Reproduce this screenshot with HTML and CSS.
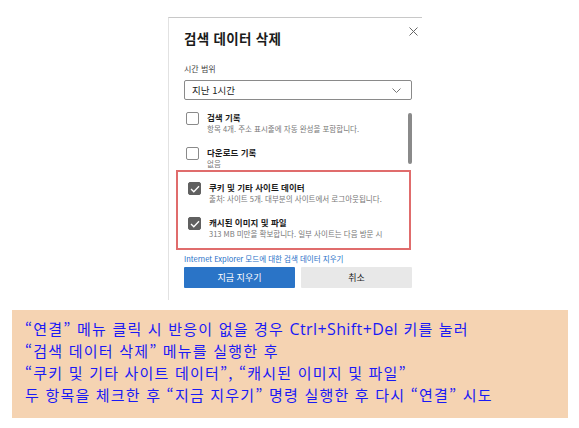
FILE: index.html
```html
<!DOCTYPE html>
<html lang="ko">
<head>
    <meta charset="UTF-8">
    <title>검색 데이터 삭제</title>
    <link rel="stylesheet" href="styles.css">
</head>
<body>

    <div class="dialog">
        <span class="close">
            <svg width="9" height="9" viewBox="0 0 9 9"><path d="M0.5 0.5 L8.5 8.5 M8.5 0.5 L0.5 8.5" stroke="#666" stroke-width="1" fill="none"/></svg>
        </span>
        <h1>검색 데이터 삭제</h1>
        <div class="label">시간 범위</div>
        <div class="select">
            <span>지난 1시간</span>
            <svg width="9" height="5" viewBox="0 0 9 5"><path d="M0.5 0.5 L4.5 4.5 L8.5 0.5" stroke="#777" stroke-width="1" fill="none"/></svg>
        </div>

        <div class="list">
            <div class="scrollbar"></div>
            <div class="item">
                <span class="box"></span>
                <div>
                    <div class="name">검색 기록</div>
                    <div class="desc">항목 4개. 주소 표시줄에 자동 완성을 포함합니다.</div>
                </div>
            </div>
            <div class="item">
                <span class="box"></span>
                <div>
                    <div class="name">다운로드 기록</div>
                    <div class="desc">없음</div>
                </div>
            </div>

            <!-- 체크한 항목 -->
            <div class="highlight">
                <div class="item">
                    <span class="box checked">
                        <svg width="10" height="8" viewBox="0 0 10 8"><path d="M1 4 L3.8 6.8 L9 1.2" stroke="#fff" stroke-width="1.3" fill="none"/></svg>
                    </span>
                    <div>
                        <div class="name">쿠키 및 기타 사이트 데이터</div>
                        <div class="desc">출처: 사이트 5개. 대부분의 사이트에서 로그아웃됩니다.</div>
                    </div>
                </div>
                <div class="item">
                    <span class="box checked">
                        <svg width="10" height="8" viewBox="0 0 10 8"><path d="M1 4 L3.8 6.8 L9 1.2" stroke="#fff" stroke-width="1.3" fill="none"/></svg>
                    </span>
                    <div>
                        <div class="name">캐시된 이미지 및 파일</div>
                        <div class="desc">313 MB 미만을 확보합니다. 일부 사이트는 다음 방문 시</div>
                    </div>
                </div>
            </div>
        </div>

        <a class="ie-link" href="#">Internet Explorer 모드에 대한 검색 데이터 지우기</a>
        <div class="buttons">
            <button class="btn primary">지금 지우기</button>
            <button class="btn">취소</button>
        </div>
    </div>

    <div class="notice">
        <p>“연결” 메뉴 클릭 시 반응이 없을 경우 <span class="latin">Ctrl+Shift+Del</span> 키를 눌러</p>
        <p>“검색 데이터 삭제” 메뉴를 실행한 후</p>
        <p>“쿠키 및 기타 사이트 데이터”, “캐시된 이미지 및 파일”</p>
        <p>두 항목을 체크한 후 “지금 지우기” 명령 실행한 후 다시 “연결” 시도</p>
    </div>

</body>
</html>
```

FILE: styles.css
```css
body {
    margin: 0;
    padding: 17px 0 0 0;
    background: #fff;
    font-family: "Noto Sans CJK KR", "Noto Sans", sans-serif;
}

/* 대화상자 */
.dialog {
    position: relative;
    margin-left: 168px;
    width: 254px;
    height: 283px;
    box-sizing: border-box;
    border-top: 1px solid #c8c8c8;
    border-left: 1px solid #e2e2e2;
    padding: 0 0 0 15px;
    color: #1b1b1b;
}

.close {
    position: absolute;
    top: 9px;
    right: 4px;
    line-height: 0;
}

.dialog h1 {
    margin: 0;
    padding-top: 11px;
    font-size: 13.5px;
    font-weight: 600;
    line-height: 18px;
    letter-spacing: 0.3px;
}

.label {
    margin-top: 17px;
    font-size: 8px;
    line-height: 10px;
    color: #444;
}

.select {
    margin-top: 6px;
    width: 228px;
    height: 20px;
    box-sizing: border-box;
    border: 1px solid #8a8a8a;
    border-radius: 2px;
    display: flex;
    align-items: center;
    justify-content: space-between;
    padding: 0 10px 0 7px;
    font-size: 9.5px;
}

/* 항목 목록 */
.list {
    position: relative;
    margin-top: 12px;
    width: 228px;
}

.scrollbar {
    position: absolute;
    top: 1px;
    right: 0;
    width: 4px;
    height: 51px;
    border-radius: 2px;
    background: #8a8a8a;
}

.item {
    display: flex;
    align-items: flex-start;
    gap: 8px;
    padding-left: 2px;
    height: 35px;
}

.box {
    width: 13px;
    height: 13px;
    flex: none;
    box-sizing: border-box;
    border: 1px solid #8a8a8a;
    border-radius: 2px;
    display: flex;
    align-items: center;
    justify-content: center;
}

.box.checked {
    background: #606060;
    border-color: #606060;
}

.name {
    font-size: 8.5px;
    font-weight: 700;
    line-height: 11px;
}

.desc {
    font-size: 7.5px;
    line-height: 11px;
    color: #777;
    white-space: nowrap;
}

.highlight {
    position: relative;
    margin-left: -8px;
    margin-top: -12px;
    width: 235px;
    height: 80px;
    box-sizing: border-box;
    border: 2px solid #e06c6c;
    background: #fff;
    padding: 10px 0 0 8px;
    overflow: hidden;
}

.ie-link {
    display: block;
    margin-top: 4px;
    font-size: 7.5px;
    line-height: 10px;
    color: #1f6fc7;
    text-decoration: none;
}

.buttons {
    margin-top: 3px;
    display: flex;
    gap: 6px;
    width: 228px;
}

.btn {
    flex: 1;
    height: 21px;
    border: none;
    border-radius: 1px;
    background: #e8e8e8;
    color: #1b1b1b;
    font-family: inherit;
    font-size: 9px;
    padding: 0;
}

.btn.primary {
    background: #2a74c7;
    color: #fff;
}

/* 안내 문구 */
.notice {
    margin: 10px 0 0 12px;
    width: 556px;
    height: 108px;
    box-sizing: border-box;
    background: #f5d3b2;
    padding: 8px 0 0 13px;
    color: #1a1af5;
    font-size: 15px;
    letter-spacing: 1.2px;
}

.notice p {
    margin: 0;
    line-height: 22px;
    white-space: nowrap;
}

.latin {
    font-family: "Open Sans", sans-serif;
    font-size: 16px;
    letter-spacing: 0.4px;
}
```
